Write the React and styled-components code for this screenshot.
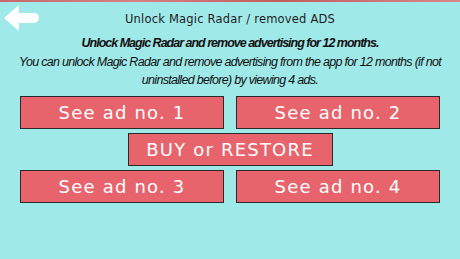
import styled, { createGlobalStyle } from "styled-components";

const GlobalStyle = createGlobalStyle`
  html, body {
    margin: 0;
    padding: 0;
    background: #a0e9e9;
  }
`;

const Screen = styled.div`
  width: 460px;
  height: 259px;
  background: #a0e9e9;
  display: flex;
  flex-direction: column;
  overflow: hidden;
`;

const TopStrip = styled.div`
  height: 2px;
  background: linear-gradient(90deg, #c86a6a, #d98080 30%, #c45c5c 60%, #d88888);
`;

const Header = styled.div`
  display: grid;
  grid-template-columns: 40px 1fr 40px;
  align-items: center;
  height: 32px;
`;

const BackButton = styled.div`
  display: flex;
  align-items: center;
  padding-left: 4px;
  height: 100%;
`;

const Title = styled.div`
  text-align: center;
  font-family: "DejaVu Sans", sans-serif;
  font-size: 11.5px;
  color: #1c1c1c;
  letter-spacing: 0.2px;
  padding-top: 2px;
`;

const Info = styled.div`
  text-align: center;
  font-family: "Liberation Sans", sans-serif;
  font-style: italic;
  font-size: 12.5px;
  letter-spacing: -0.7px;
  line-height: 18.5px;
  color: #111;
  padding: 0 6px;
`;

const Lead = styled.div`
  font-weight: 700;
  letter-spacing: -1px;
`;

const Buttons = styled.div`
  display: grid;
  grid-template-columns: 1fr 1fr;
  column-gap: 12px;
  row-gap: 4px;
  padding: 6px 20px 0;
`;

const AdButton = styled.div`
  grid-column: ${(p) => (p.$wide ? "1 / span 2" : "auto")};
  justify-self: ${(p) => (p.$wide ? "center" : "stretch")};
  width: ${(p) => (p.$wide ? "205px" : "auto")};
  box-sizing: border-box;
  height: 33px;
  background: #e8646d;
  border: 1.5px solid #2a2a2a;
  display: flex;
  align-items: center;
  justify-content: center;
  color: #ffffff;
  font-family: "DejaVu Sans", sans-serif;
  font-size: 18px;
  letter-spacing: 1.2px;
`;

const Arrow = () => (
  <svg width="36" height="28" viewBox="0 0 36 28">
    <path d="M0 14 L15 1 L15 9 L30 9 A5 5 0 0 1 30 19 L15 19 L15 27 Z" fill="#ffffff" />
  </svg>
);

export default function App() {
  return (
    <>
      <GlobalStyle />
      <Screen>
        <TopStrip />
        <Header>
          <BackButton>
            <Arrow />
          </BackButton>
          <Title>Unlock Magic Radar / removed ADS</Title>
          <div />
        </Header>
        <Info>
          <Lead>Unlock Magic Radar and remove advertising for 12 months.</Lead>
          <div>
            You can unlock Magic Radar and remove advertising from the app for 12 months (if not
            uninstalled before) by viewing 4 ads.
          </div>
        </Info>
        <Buttons>
          <AdButton>See ad no. 1</AdButton>
          <AdButton>See ad no. 2</AdButton>
          <AdButton $wide>BUY or RESTORE</AdButton>
          <AdButton>See ad no. 3</AdButton>
          <AdButton>See ad no. 4</AdButton>
        </Buttons>
      </Screen>
    </>
  );
}
